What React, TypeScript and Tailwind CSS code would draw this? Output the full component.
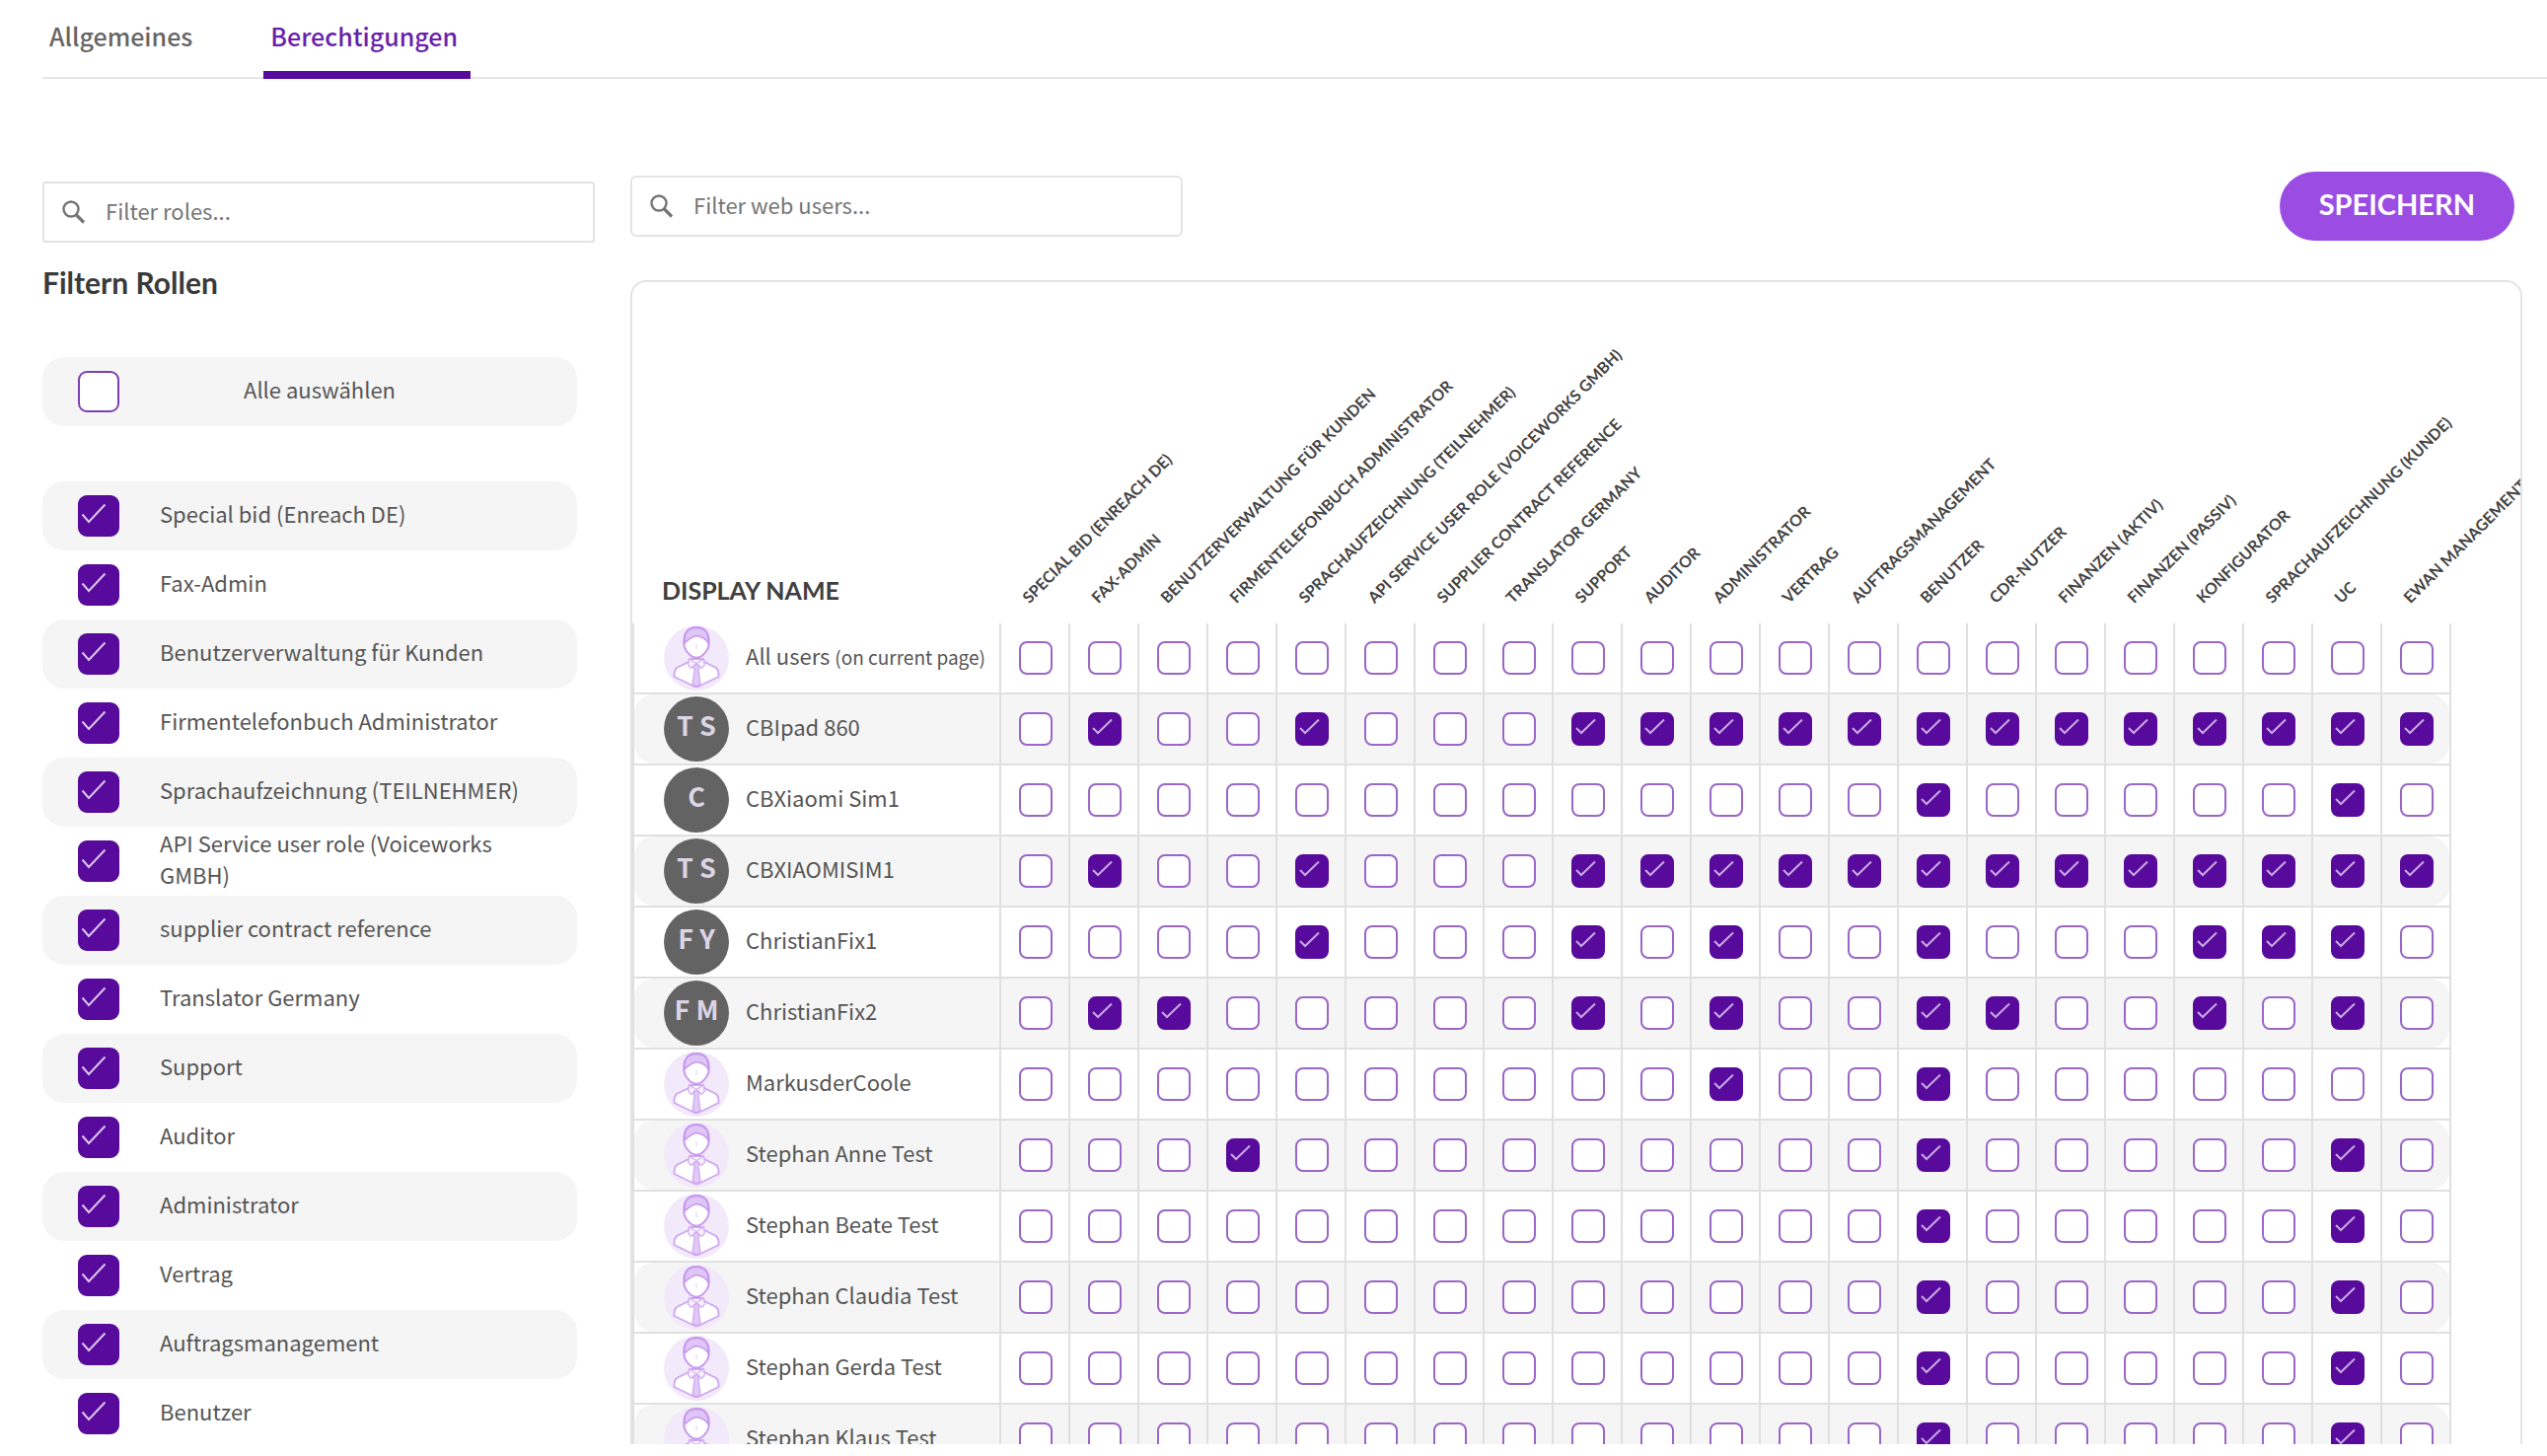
import React from "react"

const roles = [
  "Special bid (Enreach DE)",
  "Fax-Admin",
  "Benutzerverwaltung für Kunden",
  "Firmentelefonbuch Administrator",
  "Sprachaufzeichnung (TEILNEHMER)",
  "API Service user role (Voiceworks GMBH)",
  "supplier contract reference",
  "Translator Germany",
  "Support",
  "Auditor",
  "Administrator",
  "Vertrag",
  "Auftragsmanagement",
  "Benutzer",
  "CDR-Nutzer",
  "Finanzen (aktiv)",
  "Finanzen (passiv)",
  "Konfigurator",
  "Sprachaufzeichnung (KUNDE)",
  "UC",
  "EWAN Management",
]

const filterRoles = roles.slice(0, 14)

type User = { name: string; note?: string; initials?: string; roles: number[] }

const users: User[] = [
  { name: "All users", note: "(on current page)", roles: [] },
  { name: "CBIpad 860", initials: "T S", roles: [1, 4, 8, 9, 10, 11, 12, 13, 14, 15, 16, 17, 18, 19, 20] },
  { name: "CBXiaomi Sim1", initials: "C", roles: [13, 19] },
  { name: "CBXIAOMISIM1", initials: "T S", roles: [1, 4, 8, 9, 10, 11, 12, 13, 14, 15, 16, 17, 18, 19, 20] },
  { name: "ChristianFix1", initials: "F Y", roles: [4, 8, 10, 13, 17, 18, 19] },
  { name: "ChristianFix2", initials: "F M", roles: [1, 2, 8, 10, 13, 14, 17, 19] },
  { name: "MarkusderCoole", roles: [10, 13] },
  { name: "Stephan Anne Test", roles: [3, 13, 19] },
  { name: "Stephan Beate Test", roles: [13, 19] },
  { name: "Stephan Claudia Test", roles: [13, 19] },
  { name: "Stephan Gerda Test", roles: [13, 19] },
  { name: "Stephan Klaus Test", roles: [13, 19] },
]

const SearchIcon = () => (
  <svg viewBox="0 0 24 24" className="size-6 shrink-0" fill="none" stroke="#757575" aria-hidden="true">
    <circle cx="9" cy="9" r="7.5" strokeWidth="2.4" />
    <path d="M14 14.5 L22 22.5" strokeWidth="3.2" />
  </svg>
)

const PersonAvatar = () => (
  <svg viewBox="0 0 66 66" className="size-[66px] shrink-0" aria-hidden="true">
    <circle cx="33" cy="33" r="33" fill="#f2e9fb" />
    <path
      d="M26 34 L25 37 L13 43 Q10 46 10.5 52 L30 61.5 Q33 63 36 61.5 L55.5 52 Q56 46 53 43 L41 37 L40 34 Z"
      fill="#fff"
      stroke="#cfa6f1"
      strokeWidth="1.8"
    />
    <path
      d="M20.5 20 Q19 2 33 2 Q47 2 45.5 20 Q45 25 39 30.5 Q33 35 27 30.5 Q21 25 20.5 20 Z"
      fill="#fff"
      stroke="#c797ee"
      strokeWidth="2"
    />
    <path
      d="M21 18 Q20 2.500 33 2.500 Q46 2.500 45 18 Q42 12 33 10.500 Q27 12 21 18 Z"
      fill="#dfc6f6"
      stroke="#c797ee"
      strokeWidth="1.4"
    />
    <path d="M33 19 L33 24" stroke="#f0e6fa" strokeWidth="2" />
    <path
      d="M26 34 L24.500 40 L27.500 43.500 L33 39 L38.500 43.500 L41.500 40 L40 34 L33 38.500 Z"
      fill="#f6effc"
      stroke="#d4b0f2"
      strokeWidth="1.2"
    />
    <path
      d="M31 40 L35 40 L36 43 L35 45 L37 59.500 L33 62 L29 59.500 L31 45 L30 43 Z"
      fill="#e0c9f6"
      stroke="#cfa6f1"
      strokeWidth="1.2"
    />
  </svg>
)

const RoleCheckbox = ({ id, checked }: { id: string; checked: boolean }) => (
  <span className="grid shrink-0">
    <input
      id={id}
      type="checkbox"
      defaultChecked={checked}
      className="peer col-start-1 row-start-1 size-[42px] appearance-none rounded-[9px] border-2 border-[#7c40b4] bg-white checked:border-[#570a9b] checked:bg-[#570a9b]"
    />
    <svg
      viewBox="0 0 42 42"
      className="pointer-events-none col-start-1 row-start-1 hidden size-[42px] peer-checked:block"
      aria-hidden="true"
    >
      <path d="M4.500 19.500 L11 27 L27.500 9.500" fill="none" stroke="#dcc8ee" strokeWidth="2" />
    </svg>
  </span>
)

const CellCheckbox = ({ label, checked }: { label: string; checked: boolean }) => (
  <span className="grid">
    <input
      type="checkbox"
      aria-label={label}
      defaultChecked={checked}
      className="peer col-start-1 row-start-1 size-[34px] appearance-none rounded-[8px] border-2 border-[#9a66c8] bg-white checked:border-[#570a9b] checked:bg-[#570a9b]"
    />
    <svg
      viewBox="0 0 34 34"
      className="pointer-events-none col-start-1 row-start-1 hidden size-[34px] peer-checked:block"
      aria-hidden="true"
    >
      <path d="M5 16 L10 21 L24 7.500" fill="none" stroke="#c9a9e3" strokeWidth="2" />
    </svg>
  </span>
)

const App = () => {
  return (
    <div className="h-screen overflow-hidden bg-white pb-3 font-['Noto_Sans_CJK_SC','Noto_Sans',sans-serif] text-[22px] text-[#555]">
      <div className="h-full overflow-hidden">
        <nav className="ml-[43px] flex h-20 gap-[59px] border-b-2 border-[#e6e6e6] text-[25px] font-medium">
          <a href="#allgemeines" className="-mb-0.5 h-20 pl-[7px] pr-[13px] pt-[18px] leading-[36px] text-[#666]">
            Allgemeines
          </a>
          <a
            href="#berechtigungen"
            className="-mb-0.5 h-20 border-b-8 border-[#570a9b] pl-[7px] pr-[13px] pt-[18px] leading-[36px] text-[#6a1fad]"
          >
            Berechtigungen
          </a>
        </nav>

        <div className="mt-[94px] flex items-start gap-[36px] pl-[43px] pr-[25px]">
          {/* Role filter */}
          <aside className="w-[560px] shrink-0 pt-[10px]">
            <label className="flex h-[62px] items-center gap-[20px] rounded-[3px] border-2 border-[#e3e3e3] px-[18px]">
              <SearchIcon />
              <input
                type="text"
                aria-label="Filter roles"
                placeholder="Filter roles..."
                className="w-full pb-1 outline-none placeholder:text-[#757575]"
              />
            </label>
            <h2 className="mt-[20px] font-['Lato',sans-serif] text-[30px] font-bold leading-[40px] text-[#3a3a3a]">
              Filtern Rollen
            </h2>
            <div className="mr-[18px]">
              <label
                htmlFor="role-all"
                className="mt-[56px] flex h-[70px] items-center rounded-[22px] bg-[#f5f5f5] pl-[36px]"
              >
                <RoleCheckbox id="role-all" checked={false} />
                <span className="ml-[126px] pb-1.5">Alle auswählen</span>
              </label>
              <ul className="mt-14">
                {filterRoles.map((role, i) => (
                  <li key={role} className="rounded-[22px] odd:bg-[#f5f5f5]">
                    <label
                      htmlFor={`role-${i}`}
                      className="flex h-[70px] items-center gap-[41px] pl-[36px] pr-[30px] leading-[32px]"
                    >
                      <RoleCheckbox id={`role-${i}`} checked />
                      <span className="pb-1.5">{role}</span>
                    </label>
                  </li>
                ))}
              </ul>
            </div>
          </aside>

          {/* Permission matrix */}
          <main className="min-w-0 flex-1">
            <div className="flex h-[70px] items-center justify-between pr-2">
              <label className="flex h-[62px] w-[560px] items-center gap-[20px] rounded-[6px] border-2 border-[#e3e3e3] px-[18px]">
                <SearchIcon />
                <input
                  type="text"
                  aria-label="Filter web users"
                  placeholder="Filter web users..."
                  className="w-full pb-1 outline-none placeholder:text-[#757575]"
                />
              </label>
              <button className="h-[70px] rounded-full bg-[#9b4de3] px-[40px] pb-1 font-['Lato',sans-serif] text-[29px] font-bold text-white">
                SPEICHERN
              </button>
            </div>

            <div className="mt-10 overflow-hidden rounded-[16px] border-2 border-[#e3e3e3]">
              <table className="w-[1844px] table-fixed border-separate border-spacing-0">
                <thead>
                  <tr className="h-[346px]">
                    <th
                      scope="col"
                      className="w-[374px] pb-[14px] pl-[30px] text-left align-bottom font-['Lato',sans-serif] text-[25px] font-bold leading-[40px] text-[#3f3f3f]"
                    >
                      DISPLAY NAME
                    </th>
                    {roles.map((role) => (
                      <th key={role} scope="col" className="w-[70px] pb-[18px] pl-[30px] align-bottom">
                        <div className="w-0 origin-bottom-left -rotate-45 whitespace-nowrap text-left font-['Lato',sans-serif] text-[16px] font-bold uppercase leading-[16px] text-[#444]">
                          {role}
                        </div>
                      </th>
                    ))}
                  </tr>
                </thead>
                <tbody>
                  {users.map((user) => (
                    <tr key={user.name} className="group">
                      <th
                        scope="row"
                        className="border-b-2 border-l-2 border-r-2 border-[#e0e0e0] p-0 text-left font-normal"
                      >
                        <div className="flex h-[70px] items-center gap-[17px] rounded-l-[20px] pl-[30px] group-even:bg-[#f5f5f5]">
                          {user.initials ? (
                            <span className="flex size-[66px] shrink-0 justify-center rounded-full bg-[#636363] text-[27px] font-bold leading-[58px] text-[#dcd5e6]">
                              {user.initials}
                            </span>
                          ) : (
                            <PersonAvatar />
                          )}
                          <span className="whitespace-nowrap pb-1.5">
                            {user.name} {user.note && <small className="text-[19px]">{user.note}</small>}
                          </span>
                        </div>
                      </th>
                      {roles.map((role, i) => (
                        <td key={role} className="group/cell border-b-2 border-r-2 border-[#e0e0e0] p-0">
                          <div className="flex h-[70px] items-center justify-center pl-0.5 group-even:bg-[#f5f5f5] group-last/cell:rounded-r-[20px]">
                            <CellCheckbox label={`${user.name}: ${role}`} checked={user.roles.includes(i)} />
                          </div>
                        </td>
                      ))}
                    </tr>
                  ))}
                </tbody>
              </table>
            </div>
          </main>
        </div>
      </div>
    </div>
  )
}

export default App
